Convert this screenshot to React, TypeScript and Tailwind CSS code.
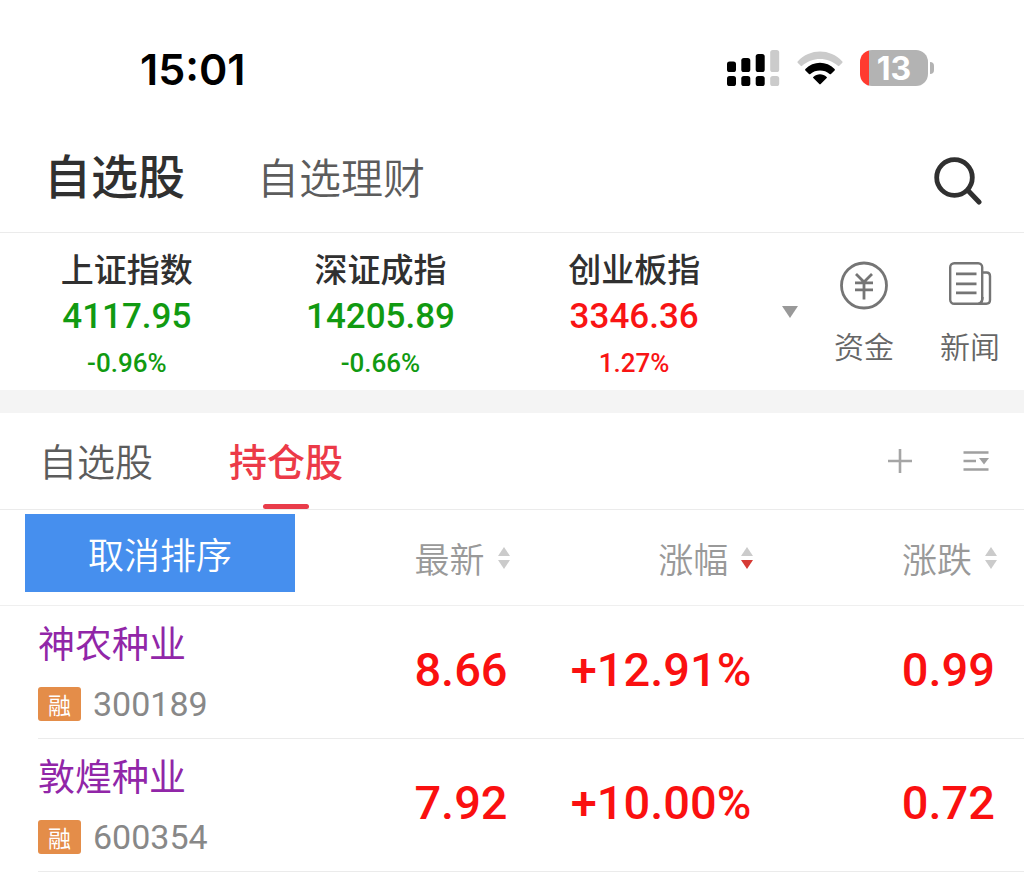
import { useState } from 'react';

type Quote = { name: string; value: string; change: string; up: boolean };
type Stock = { name: string; code: string; price: string; percent: string; diff: string };

const indices: Quote[] = [
  { name: '上证指数', value: '4117.95', change: '-0.96%', up: false },
  { name: '深证成指', value: '14205.89', change: '-0.66%', up: false },
  { name: '创业板指', value: '3346.36', change: '1.27%', up: true },
];

const stocks: Stock[] = [
  { name: '神农种业', code: '300189', price: '8.66', percent: '+12.91%', diff: '0.99' },
  { name: '敦煌种业', code: '600354', price: '7.92', percent: '+10.00%', diff: '0.72' },
];

const columns = ['最新', '涨幅', '涨跌'];

const SignalIcon = () => (
  <svg width="53" height="36" viewBox="0 0 53 36" aria-hidden="true">
    <g fill="#000">
      <rect x="0" y="11.5" width="9" height="10.5" rx="2.6" />
      <rect x="14.3" y="8" width="9" height="14" rx="2.6" />
      <rect x="28.7" y="4" width="9" height="18" rx="2.6" />
      <rect x="0" y="26" width="9" height="10" rx="2.6" />
      <rect x="14.3" y="26" width="9" height="10" rx="2.6" />
      <rect x="28.7" y="26" width="9" height="10" rx="2.6" />
    </g>
    <g fill="#cbcbcb">
      <rect x="43.2" y="0" width="9" height="22" rx="2.6" />
      <rect x="43.2" y="26" width="9" height="10" rx="2.6" />
    </g>
  </svg>
);

const WifiIcon = () => (
  <svg width="46" height="34" viewBox="0 0 46 34" aria-hidden="true">
    <path d="M.7 10.4C13-2.8 33-2.8 45.3 10.4q.7.7 0 1.4l-3 3q-.7.7-1.4 0C31 5.6 15 5.6 5.1 14.8q-.7.7-1.4 0l-3-3q-.7-.7 0-1.4Z" fill="#cbcbcb" />
    <path d="M8.4 18C16.5 9.6 29.5 9.6 37.6 18q.7.7 0 1.4l-3.600 3.600q-.7.7-1.400 0C27.400 18.400 18.600 18.400 13.400 23q-.7.7-1.400 0l-3.600-3.600q-.7-.7 0-1.400Z" fill="#000" />
    <path d="M16.3 25.9C20.2 22.2 25.8 22.2 29.7 25.9q.6.6 0 1.2l-6 6q-.7.7-1.4 0l-6-6q-.6-.6 0-1.2Z" fill="#000" />
  </svg>
);

const SearchIcon = () => (
  <svg width="48" height="48" viewBox="0 0 48 48" fill="none" stroke="#303030" aria-hidden="true">
    <circle cx="20.5" cy="20.5" r="17.8" strokeWidth="4.8" />
    <path d="m34 33.5 11 11.5" strokeWidth="5" strokeLinecap="round" />
  </svg>
);

const FundsIcon = () => (
  <svg width="50" height="50" viewBox="0 0 50 50" fill="none" stroke="#757575" aria-hidden="true">
    <circle cx="25" cy="24.5" r="22.5" strokeWidth="2.8" />
    <path d="m17 13 8 8 8-8M25 21v17.5M16 21.8h18M16 28.8h18" strokeWidth="2.8" />
  </svg>
);

const NewsIcon = () => (
  <svg width="44" height="50" viewBox="0 0 44 50" fill="none" stroke="#757575" aria-hidden="true">
    <rect x="2.2" y="2.2" width="32" height="40.5" rx="4" strokeWidth="2.4" />
    <path d="M35 11.5h3.5q3.5 0 3.5 3.5v24q0 3.7-3.7 3.7H30M34.5 36q0 4.7-3 6.5" strokeWidth="2.4" />
    <path d="M8 12.8h20.5M8 22.8h20.5M8 31.8h20.5" strokeWidth="2.8" />
  </svg>
);

const PlusIcon = () => (
  <svg width="26" height="26" viewBox="0 0 26 26" stroke="#a5a5a5" strokeWidth="2.6" aria-hidden="true">
    <path d="M13 1v24M1 13h24" />
  </svg>
);

const ListIcon = () => (
  <svg width="26" height="22" viewBox="0 0 26 22" stroke="#a0a0a0" strokeWidth="2.4" aria-hidden="true">
    <path d="M.5 2.5h25M.5 11h12.5M.5 19.5h25" />
    <path d="M16 8h10l-5 6.5z" fill="#a0a0a0" stroke="none" />
  </svg>
);

const SortIcon = ({ active }: { active: boolean }) => (
  <svg width="14" height="24" viewBox="0 0 14 24" aria-hidden="true">
    <path d="M1 10 7 1l6 9z" fill="#cbcbcb" />
    <path d="M1 14h12l-6 9z" fill={active ? '#d63a35' : '#cbcbcb'} />
  </svg>
);

const StatusBar = () => (
  <div className="flex h-[130px] items-center justify-between pt-2 pr-[90px] pl-[140px]">
    <span className="font-['Inter',sans-serif] text-[43px] leading-[52px] font-semibold text-black">15:01</span>
    <div className="flex items-center gap-[17px] pb-[2px]">
      <SignalIcon />
      <WifiIcon />
      <div className="flex items-center gap-[2px]">
        {/* the charge level is the red stop of the gradient */}
        <div className="flex h-[36px] w-[68px] items-center justify-center rounded-[12px] bg-[linear-gradient(90deg,#ff3b30_9px,#b3b3b3_9px)] pt-[2px]">
          <span className="font-['Inter',sans-serif] text-[32px] leading-[40px] font-bold text-white">13</span>
        </div>
        <span className="h-[12px] w-[4px] rounded-r-full bg-[#b3b3b3]" />
      </div>
    </div>
  </div>
);

const App = () => {
  const [tab, setTab] = useState('持仓股');
  const [sorted, setSorted] = useState('涨幅');

  return (
    <div className="min-h-screen w-full bg-white font-['Noto_Sans_CJK_SC',sans-serif] text-[#303030]">
      <StatusBar />

      <header className="flex h-[103px] items-center justify-between border-b border-[#ebebeb] pr-[42px] pl-[44px]">
        <div className="flex items-baseline gap-[72px] pb-3">
          <button type="button" className="text-[47px] leading-[60px] font-medium">自选股</button>
          <button type="button" className="text-[42px] leading-[60px] font-[350] text-[#5c5c5c]">自选理财</button>
        </div>
        <button type="button" aria-label="搜索">
          <SearchIcon />
        </button>
      </header>

      <section className="flex h-[157px]">
        <div className="grid flex-1 grid-cols-3 pt-3 text-center">
          {indices.map((item) => (
            <div key={item.name}>
              <h2 className="text-[33px] leading-[46px] font-medium">{item.name}</h2>
              <div className={item.up ? 'text-[#f91414]' : 'text-[#119a11]'}>
                <p className="font-['Roboto',sans-serif] text-[35px] leading-[52px] font-medium">{item.value}</p>
                <p className="font-['Roboto',sans-serif] text-[26px] leading-[40px] font-medium">{item.change}</p>
              </div>
            </div>
          ))}
        </div>
        <div className="flex gap-4 pr-[9px]">
          <button type="button" aria-label="更多指数" className="-mr-4 flex w-[58px] items-center justify-center">
            <svg width="16" height="12" viewBox="0 0 16 12" aria-hidden="true">
              <path d="M0 0h16L8 12z" fill="#999" />
            </svg>
          </button>
          <button type="button" className="flex w-[90px] flex-col items-center pt-7 text-[30px] leading-[44px] font-[350] text-[#666]">
            <FundsIcon />
            <span className="pt-3">资金</span>
          </button>
          <button type="button" className="flex w-[90px] flex-col items-center pt-7 text-[30px] leading-[44px] font-[350] text-[#666]">
            <NewsIcon />
            <span className="pt-3">新闻</span>
          </button>
        </div>
      </section>

      <div className="h-[23px] bg-[#f4f4f4]" />

      <nav className="flex h-[97px] items-center justify-between border-b border-[#ebebeb] pr-[35px] pl-[39px]">
        <div className="flex h-full gap-[76px]">
          {['自选股', '持仓股'].map((label) => (
            <button
              key={label}
              type="button"
              onClick={() => setTab(label)}
              className={`relative h-full pb-1 text-[38px] ${tab === label ? 'font-medium text-[#ec3a48]' : 'font-[350] text-[#5c5c5c]'}`}
            >
              {label}
              {tab === label && (
                <span className="absolute bottom-0 left-1/2 h-[5px] w-[46px] -translate-x-1/2 rounded-full bg-[#e93c4a]" />
              )}
            </button>
          ))}
        </div>
        <div className="flex items-center gap-[50px]">
          <button type="button" aria-label="添加"><PlusIcon /></button>
          <button type="button" aria-label="管理"><ListIcon /></button>
        </div>
      </nav>

      <table className="w-full table-fixed border-separate border-spacing-0">
        <colgroup>
          <col />
          <col className="w-[23.8%]" />
          <col className="w-[23.8%]" />
          <col className="w-[23.8%]" />
        </colgroup>
        <thead>
          <tr className="h-[96px]">
            <th className="border-b border-[#efefef] p-0 pt-1 pl-[25px] text-left align-top">
              <button
                type="button"
                onClick={() => setSorted('')}
                className="h-[78px] w-[270px] bg-[#468fee] text-[36px] font-[350] text-white"
              >
                取消排序
              </button>
            </th>
            {columns.map((label) => (
              <th key={label} className="border-b border-[#efefef] p-0 pr-[26px] text-right">
                <button
                  type="button"
                  onClick={() => setSorted(label)}
                  className="inline-flex items-center gap-3 text-[35px] leading-[48px] font-[350] text-[#999]"
                >
                  {label}
                  <SortIcon active={sorted === label} />
                </button>
              </th>
            ))}
          </tr>
        </thead>
        <tbody>
          {stocks.map((stock) => (
            <tr key={stock.code}>
              <td className="p-0 pl-[38px]">
                <div className="h-[133px] border-b border-[#ebebeb] pt-[14px]">
                  <div className="text-[37px] leading-[44px] text-[#9126a8]">{stock.name}</div>
                  <div className="flex items-center gap-3 pt-[23px]">
                    <span className="h-[34px] w-[43px] rounded-[3px] bg-[#e48d49] text-center text-[23px] leading-[34px] text-white">融</span>
                    <span className="font-['Roboto',sans-serif] text-[34px] leading-[34px] text-[#888]">{stock.code}</span>
                  </div>
                </div>
              </td>
              {[stock.price, stock.percent, stock.diff].map((value, index) => (
                <td
                  key={index}
                  className="border-b border-[#ebebeb] p-0 pr-[29px] pb-[5px] text-right font-['Roboto',sans-serif] text-[47px] leading-[60px] font-medium text-[#fa1010]"
                >
                  {value}
                </td>
              ))}
            </tr>
          ))}
        </tbody>
      </table>
    </div>
  );
};

export default App;
